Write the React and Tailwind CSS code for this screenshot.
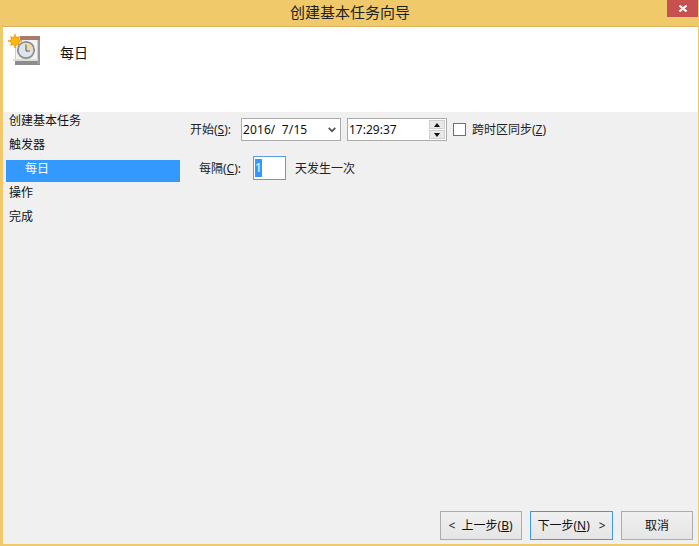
const F = { fontFamily: '"Noto Sans", "Noto Sans CJK SC", sans-serif' };

function TaskIcon() {
  return (
    <svg width="32" height="32" viewBox="0 0 32 32" className="shrink-0">
      <rect x="7" y="26" width="25" height="5" fill="#8c8c8c" />
      <rect x="29" y="6" width="3" height="24" fill="#9a9a9a" />
      <rect x="7.5" y="3.5" width="22" height="23" fill="#f4f2ee" stroke="#d0cec8" strokeWidth="1" />
      <rect x="12" y="2" width="20" height="4" fill="#a87c68" />
      <rect x="5" y="25" width="25" height="2" fill="#dcdcd8" />
      <circle cx="18" cy="16" r="8.2" fill="#dfe4ea" stroke="#8a8f94" strokeWidth="1.8" />
      <path d="M18 9.5a6.5 6.5 0 0 1 6.5 6.5H18z" fill="#f3d9a0" />
      <path d="M18 10.5V17h4" fill="none" stroke="#4a5a6a" strokeWidth="1" />
      <g stroke="#f29c00" strokeWidth="1.4">
        <path d="M7 0v14M0 7h14M2.5 2.5l9 9M11.5 2.5l-9 9" />
      </g>
      <circle cx="7" cy="7" r="4.3" fill="#fdb813" stroke="#f29c00" />
    </svg>
  );
}

function Chevron() {
  return (
    <svg width="8" height="6" viewBox="0 0 8 6">
      <path d="M.7.8L4 4.2 7.3.8" fill="none" stroke="#555" strokeWidth="1.7" />
    </svg>
  );
}

function WinButton({ children, focused }) {
  return (
    <div
      className={`h-[29px] flex items-center justify-center border text-[12px] text-[#111] bg-gradient-to-b from-[#f0f0f0] to-[#e5e5e5] ${
        focused ? "border-[#3c9ae8]" : "border-[#acacac]"
      }`}
    >
      {children}
    </div>
  );
}

export default function App() {
  return (
    <div style={F} className="w-[699px] h-[546px] bg-[#f0c96b] flex flex-col overflow-hidden">
      <div className="h-[27px] shrink-0 relative flex items-center justify-center text-[15px] leading-none text-[#222] border-b border-[#d9b25e] mr-[1px] ml-[2px]">
        <span className="pb-[2px]">创建基本任务向导</span>
        <div className="absolute right-[0px] top-0 w-[31px] h-[17px] bg-[#c75050] flex items-center justify-center">
          <svg width="8" height="7" viewBox="0 0 8 7">
            <path d="M.5.5l7 6M7.5.5l-7 6" stroke="#fff" strokeWidth="2" />
          </svg>
        </div>
      </div>

      <div className="flex-1 flex flex-col ml-[3px] mr-[1px] mb-[2px] bg-[#f0f0f0]">
        <div className="h-[85px] shrink-0 bg-white flex items-start pl-[5px] pt-[7px]">
          <TaskIcon />
          <span className="ml-[20px] mt-[9px] text-[14px] leading-[20px] text-[#111]">每日</span>
        </div>

        <div className="flex-1 flex min-h-0">
          <div className="w-[177px] shrink-0 pl-[3px] text-[12px] text-[#111]">
            <div className="h-[24px] flex items-center pl-[3px] pt-[1px] mt-[-4px]">创建基本任务</div>
            <div className="h-[24px] flex items-center pl-[3px] pt-[1px]">触发器</div>
            <div className="h-[22px] mt-[4px] mb-[-2px] pl-[19px] leading-[18px] bg-[#3399ff] text-white">每日</div>
            <div className="h-[24px] flex items-center pl-[3px] pt-[1px]">操作</div>
            <div className="h-[24px] flex items-center pl-[3px] pt-[1px]">完成</div>
          </div>

          <div className="flex-1 flex flex-col pl-[10px] pt-[6px] pr-[5px] pb-[4px] text-[12px] text-[#222]">
            <div className="flex items-center h-[23px]">
              <span className="w-[51px] pt-[1px]">
                开始(<span className="underline">S</span>):
              </span>
              <div className="w-[100px] h-[23px] bg-white border border-[#ababab] flex items-center justify-between pl-[1px] pr-[4px] text-[#111]">
                <span className="whitespace-pre tracking-[0.1px] pt-[1px]">2016/  7/15</span>
                <Chevron />
              </div>
              <div className="ml-[6px] w-[100px] h-[23px] bg-white border border-[#ababab] flex items-center justify-between pl-[1px] pr-[1px] text-[#111]">
                <span className="pt-[1px]">17:29:37</span>
                <div className="flex flex-col gap-[1px] w-[16px]">
                  <div className="h-[9px] bg-[#e8e8e8] border border-[#cfcfcf] flex items-center justify-center">
                    <div className="w-0 h-0 border-l-[3px] border-r-[3px] border-b-[4px] border-l-transparent border-r-transparent border-b-[#111]" />
                  </div>
                  <div className="h-[9px] bg-[#e8e8e8] border border-[#cfcfcf] flex items-center justify-center">
                    <div className="w-0 h-0 border-l-[3px] border-r-[3px] border-t-[4px] border-l-transparent border-r-transparent border-t-[#111]" />
                  </div>
                </div>
              </div>
              <div className="ml-[6px] w-[13px] h-[13px] bg-white border border-[#707070]" />
              <span className="ml-[6px]">
                跨时区同步(<span className="underline">Z</span>)
              </span>
            </div>

            <div className="flex items-center h-[24px] mt-[15px] pl-[9px]">
              <span className="w-[54px] pt-[1px]">
                每隔(<span className="underline">C</span>):
              </span>
              <div className="w-[33px] h-[24px] bg-white border border-[#569de5] flex items-center pl-[1px] pr-[1px]">
                <span className="bg-[#3399ff] text-white h-[18px] leading-[18px] w-[7px]">1</span>
              </div>
              <span className="ml-[9px] pt-[1px]">天发生一次</span>
            </div>

            <div className="mt-auto flex justify-end gap-[8px]">
              <div className="w-[82px]"><WinButton>&lt;&nbsp;&nbsp;上一步(<span className="underline">B</span>)<span className="w-[1px]" /></WinButton></div>
              <div className="w-[83px]"><WinButton focused>下一步(<span className="underline">N</span>)<span className="ml-[9px]">&gt;</span></WinButton></div>
              <div className="w-[72px]"><WinButton>取消</WinButton></div>
            </div>
          </div>
        </div>
      </div>
    </div>
  );
}
